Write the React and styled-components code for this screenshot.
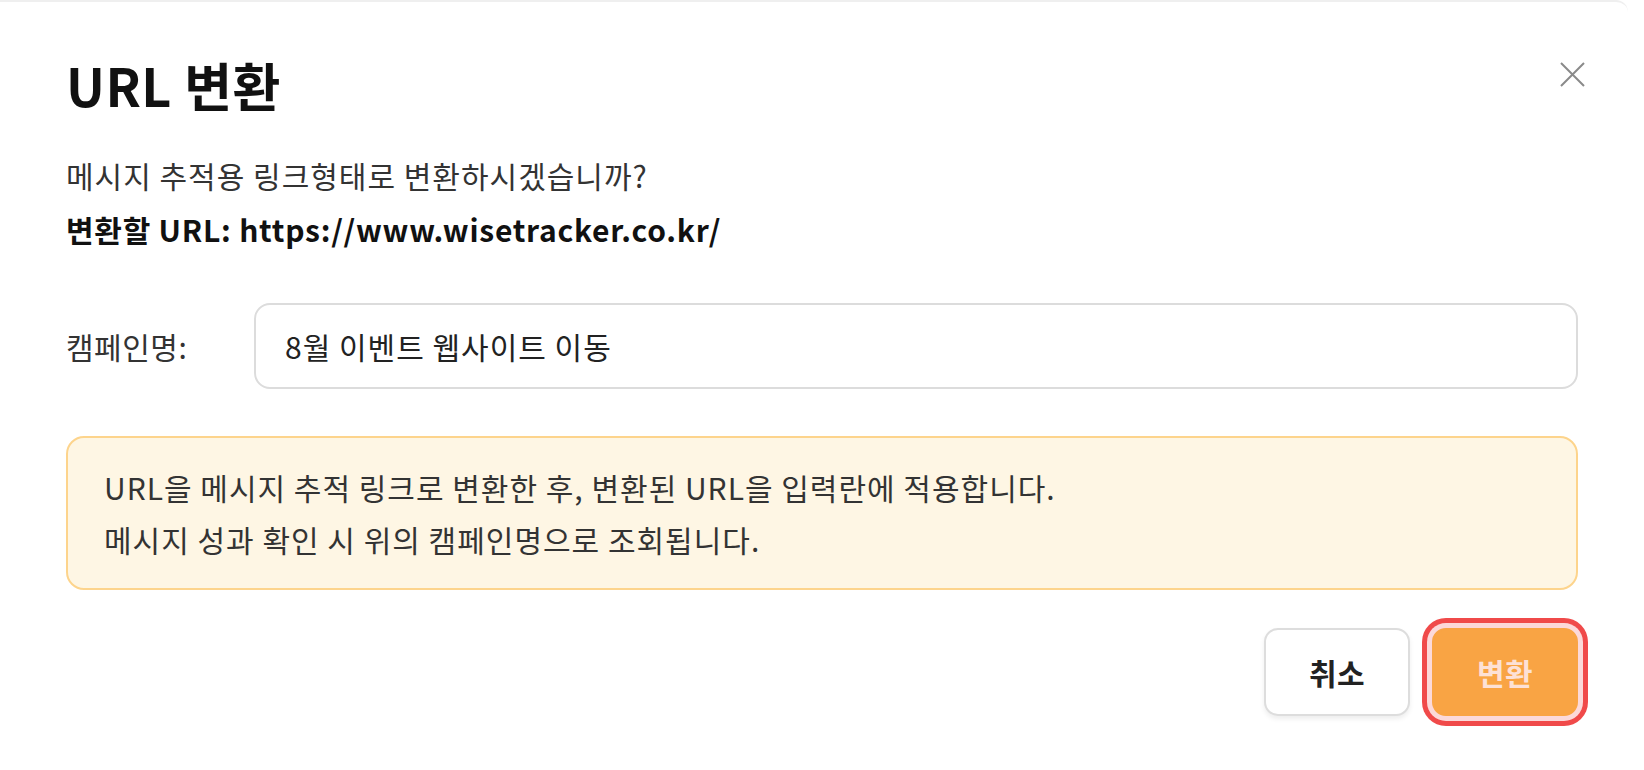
import React from 'react';
import styled, { createGlobalStyle } from 'styled-components';

const GlobalStyle = createGlobalStyle`
  html, body {
    margin: 0;
    padding: 0;
    background: #ffffff;
  }
  body {
    font-family: "Noto Sans CJK KR", "Noto Sans", sans-serif;
    color: #333333;
  }
`;

const Modal = styled.div`
  position: relative;
  margin-right: 16px;
  border-top: 2px solid #efefef;
  border-top-right-radius: 12px;
  padding: 52px 50px 40px 66px;
  display: flex;
  flex-direction: column;
`;

const Title = styled.h1`
  margin: 0;
  font-size: 52px;
  line-height: 62px;
  letter-spacing: 0.5px;
  font-weight: 700;
  color: #111111;
`;

const CloseButton = styled.button`
  position: absolute;
  top: 60px;
  right: 43px;
  width: 25px;
  height: 25px;
  padding: 0;
  border: none;
  background: none;
  cursor: pointer;
`;

const Message = styled.p`
  margin: ${(p) => (p.first ? '38px' : '12px')} 0 0;
  font-size: 30px;
  line-height: 42px;
  letter-spacing: ${(p) => (p.bold ? '0.75px' : '1px')};
  font-weight: ${(p) => (p.bold ? 700 : 400)};
  color: ${(p) => (p.bold ? '#111111' : '#333333')};
`;

const FieldRow = styled.div`
  margin-top: 53px;
  display: flex;
  align-items: center;
`;

const Label = styled.label`
  width: 188px;
  flex-shrink: 0;
  font-size: 30px;
  letter-spacing: 0.5px;
  color: #333333;
`;

const Input = styled.input`
  flex: 1;
  height: 86px;
  box-sizing: border-box;
  border: 2px solid #dcdcdc;
  border-radius: 16px;
  padding: 0 29px;
  font-family: "Noto Sans CJK KR", "Noto Sans", sans-serif;
  font-size: 30px;
  letter-spacing: 1px;
  color: #222222;
  outline: none;
  background: #ffffff;
`;

const Notice = styled.div`
  margin-top: 47px;
  background: #fef6e4;
  border: 2px solid #fdd48c;
  border-radius: 18px;
  padding: 23px 36px;
  font-size: 30px;
  line-height: 52px;
  letter-spacing: 1px;
  color: #333333;
`;

const Footer = styled.div`
  margin-top: 38px;
  display: flex;
  justify-content: flex-end;
  gap: 22px;
`;

const Button = styled.button`
  width: 146px;
  height: 88px;
  box-sizing: border-box;
  border-radius: 14px;
  font-family: "Noto Sans CJK KR", "Noto Sans", sans-serif;
  font-size: 30px;
  font-weight: 700;
  letter-spacing: 0.5px;
  cursor: pointer;
  border: 2px solid ${(p) => (p.primary ? '#f9a444' : '#dddddd')};
  background: ${(p) => (p.primary ? '#f9a444' : '#ffffff')};
  color: ${(p) => (p.primary ? '#fde1d6' : '#222222')};
  box-shadow: ${(p) =>
    p.primary
      ? '0 0 0 5px #fcd9d9, 0 0 0 10px #f04a4a'
      : '0 3px 5px rgba(0, 0, 0, 0.07)'};
`;

function CloseIcon() {
  return (
    <svg width="25" height="25" viewBox="0 0 25 25">
      <path d="M1 1 L24 24 M24 1 L1 24" stroke="#8a8a8a" strokeWidth="2" fill="none" />
    </svg>
  );
}

export default function App() {
  return (
    <>
      <GlobalStyle />
      <Modal>
        <Title>URL 변환</Title>
        <CloseButton aria-label="닫기">
          <CloseIcon />
        </CloseButton>
        <Message first>메시지 추적용 링크형태로 변환하시겠습니까?</Message>
        <Message bold>변환할 URL: https://www.wisetracker.co.kr/</Message>
        <FieldRow>
          <Label>캠페인명:</Label>
          <Input defaultValue="8월 이벤트 웹사이트 이동" />
        </FieldRow>
        <Notice>
          URL을 메시지 추적 링크로 변환한 후, 변환된 URL을 입력란에 적용합니다.
          <br />
          메시지 성과 확인 시 위의 캠페인명으로 조회됩니다.
        </Notice>
        <Footer>
          <Button>취소</Button>
          <Button primary>변환</Button>
        </Footer>
      </Modal>
    </>
  );
}
